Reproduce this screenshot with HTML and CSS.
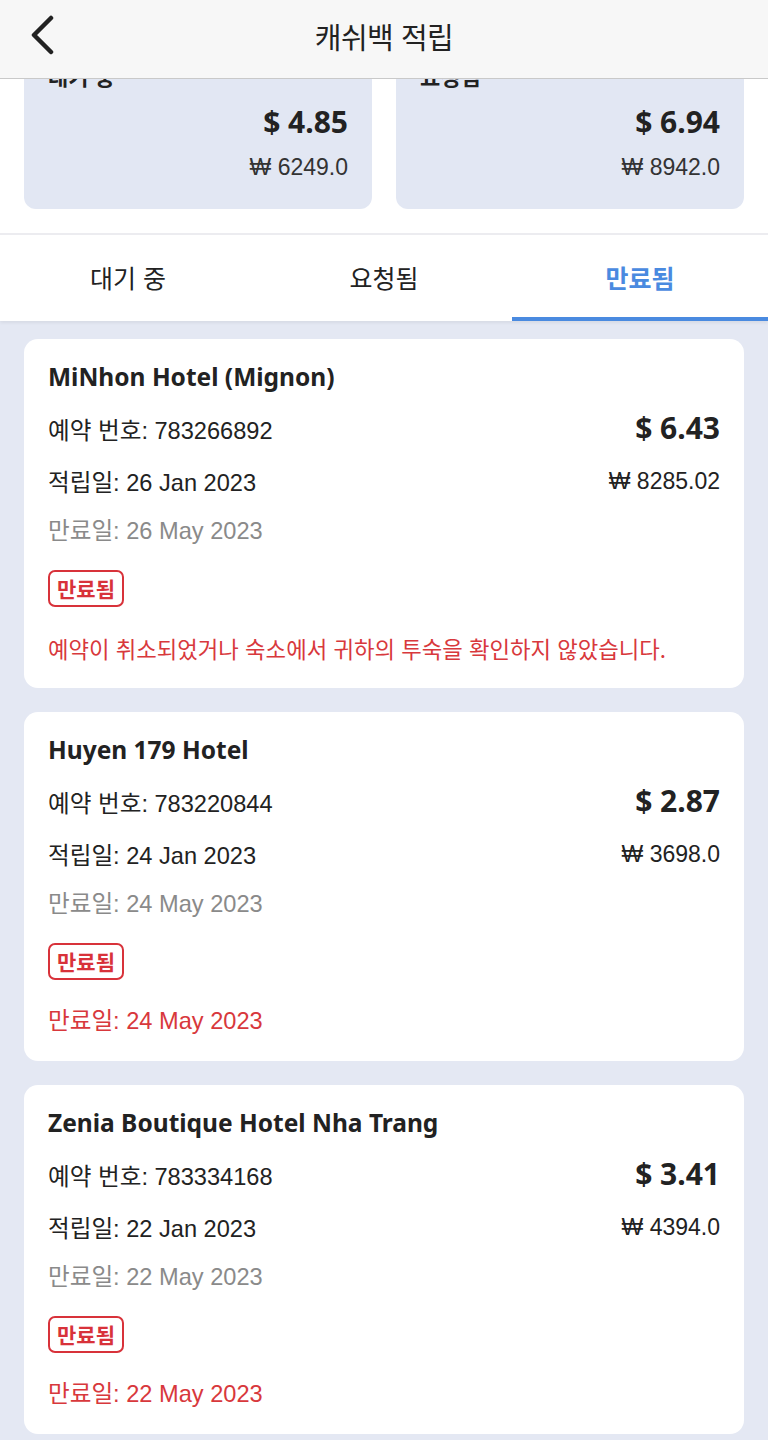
FILE: index.html
```html
<!DOCTYPE html>
<html lang="ko">
<head>
<meta charset="utf-8">
<title>캐쉬백 적립</title>
<link rel="stylesheet" href="styles.css">
</head>
<body>
<header class="topbar">
  <button class="back" aria-label="뒤로">
    <svg width="30" height="40" viewBox="0 0 30 40"><path d="M25 3 L8 20 L25 37" fill="none" stroke="#222" stroke-width="4.5" stroke-linecap="round" stroke-linejoin="round"/></svg>
  </button>
  <h1 class="title">캐쉬백 적립</h1>
</header>

<section class="summary">
  <div class="sum-card">
    <div class="sum-label">대기 중</div>
    <div class="sum-usd">$ 4.85</div>
    <div class="sum-krw">₩ 6249.0</div>
  </div>
  <div class="sum-card">
    <div class="sum-label">요청됨</div>
    <div class="sum-usd">$ 6.94</div>
    <div class="sum-krw">₩ 8942.0</div>
  </div>
</section>

<nav class="tabs">
  <div class="tab">대기 중</div>
  <div class="tab">요청됨</div>
  <div class="tab active">만료됨</div>
</nav>

<main class="list">
  <article class="card">
    <h2 class="hotel">MiNhon Hotel (Mignon)</h2>
    <div class="grid">
      <div class="r1 label">예약 번호: 783266892</div>
      <div class="r1 usd">$ 6.43</div>
      <div class="r2 label">적립일: 26 Jan 2023</div>
      <div class="r2 krw">₩ 8285.02</div>
      <div class="r3 label muted">만료일: 26 May 2023</div>
    </div>
    <span class="badge">만료됨</span>
    <p class="note">예약이 취소되었거나 숙소에서 귀하의 투숙을 확인하지 않았습니다.</p>
  </article>

  <article class="card">
    <h2 class="hotel">Huyen 179 Hotel</h2>
    <div class="grid">
      <div class="r1 label">예약 번호: 783220844</div>
      <div class="r1 usd">$ 2.87</div>
      <div class="r2 label">적립일: 24 Jan 2023</div>
      <div class="r2 krw">₩ 3698.0</div>
      <div class="r3 label muted">만료일: 24 May 2023</div>
    </div>
    <span class="badge">만료됨</span>
    <p class="note date">만료일: 24 May 2023</p>
  </article>

  <article class="card">
    <h2 class="hotel">Zenia Boutique Hotel Nha Trang</h2>
    <div class="grid">
      <div class="r1 label">예약 번호: 783334168</div>
      <div class="r1 usd">$ 3.41</div>
      <div class="r2 label">적립일: 22 Jan 2023</div>
      <div class="r2 krw">₩ 4394.0</div>
      <div class="r3 label muted">만료일: 22 May 2023</div>
    </div>
    <span class="badge">만료됨</span>
    <p class="note date">만료일: 22 May 2023</p>
  </article>
</main>
</body>
</html>
```

FILE: styles.css
```css
* { box-sizing: border-box; }
html, body { margin: 0; padding: 0; }
body {
  width: 768px;
  min-height: 1440px;
  background: #e4e8f3;
  font-family: "Liberation Sans", "Noto Sans CJK KR", sans-serif;
  color: #222;
  overflow: hidden;
}

.topbar {
  position: fixed;
  top: 0; left: 0;
  width: 768px;
  height: 79px;
  background: #f7f7f7;
  border-bottom: 1px solid #c9c9c9;
  display: flex;
  align-items: center;
  justify-content: center;
  z-index: 10;
}
.back {
  position: absolute;
  left: 26px;
  top: 15px;
  border: 0;
  background: none;
  padding: 0;
  width: 30px;
  height: 40px;
}
.title {
  margin: 0;
  font-family: "Noto Sans CJK KR", sans-serif;
  font-weight: 400;
  font-size: 29px;
  color: #222;
  letter-spacing: -0.5px;
  transform: translateY(-3px);
}

.summary {
  background: #fff;
  padding: 42px 24px 24px;
  display: grid;
  grid-template-columns: 1fr 1fr;
  gap: 24px;
  border-bottom: 2px solid #ececf0;
}
.sum-card {
  background: #e2e7f3;
  border-radius: 12px;
  padding: 18px 24px 24px;
  display: flex;
  flex-direction: column;
  align-items: flex-end;
  height: 167px;
}
.sum-label {
  align-self: flex-start;
  font-family: "Noto Sans CJK KR", sans-serif;
  font-weight: 700;
  font-size: 22px;
  line-height: 30px;
}
.sum-usd {
  font-family: "Noto Sans", sans-serif;
  font-weight: 700;
  font-size: 30px;
  line-height: 40px;
  margin-top: 12px;
}
.sum-krw {
  font-size: 23px;
  line-height: 30px;
  margin-top: 10px;
  color: #333;
}

.tabs {
  display: grid;
  grid-template-columns: repeat(3, 1fr);
  height: 86px;
  background: #fff;
  box-shadow: 0 2px 3px rgba(0,0,0,0.06);
  position: relative;
}
.tab {
  display: flex;
  align-items: center;
  justify-content: center;
  font-family: "Noto Sans CJK KR", sans-serif;
  font-size: 25px;
  color: #222;
  border-bottom: 4px solid transparent;
  padding-top: 2px;
}
.tab.active {
  color: #4a8ae0;
  font-weight: 700;
  border-bottom-color: #4a8ae0;
}

.list {
  padding: 18px 24px 24px;
  display: flex;
  flex-direction: column;
  gap: 24px;
}
.card {
  background: #fff;
  border-radius: 14px;
  padding: 22px 24px 25px;
  display: flex;
  flex-direction: column;
  align-items: flex-start;
}
.hotel {
  margin: 0;
  font-family: "Noto Sans", sans-serif;
  font-size: 24.5px;
  font-weight: 700;
  line-height: 32px;
  height: 32px;
  color: #222;
}
.grid {
  width: 100%;
  display: grid;
  grid-template-columns: 1fr auto;
  grid-template-rows: 52px 52px 44px;
  margin-top: 10px;
}
.grid > div { display: flex; align-items: center; }
.r1 { grid-row: 1; }
.r2 { grid-row: 2; }
.r3 { grid-row: 3; }
.label {
  grid-column: 1;
  font-size: 23.6px;
  color: #222;
}
.label.muted { color: #8a8a8a; }
.usd {
  grid-column: 2;
  justify-content: flex-end;
  font-family: "Noto Sans", sans-serif;
  font-size: 30px;
  font-weight: 700;
  color: #222;
  padding-bottom: 4px;
}
.krw {
  grid-column: 2;
  justify-content: flex-end;
  font-size: 23px;
  color: #222;
}
.badge {
  margin-top: 19px;
  height: 37px;
  padding: 0 7px;
  border: 2px solid #d8323a;
  border-radius: 7px;
  color: #d8323a;
  font-family: "Noto Sans CJK KR", sans-serif;
  font-weight: 700;
  font-size: 21px;
  line-height: 33px;
}
.note {
  margin: 26px 0 0;
  font-family: "Noto Sans CJK KR", sans-serif;
  font-size: 22.3px;
  line-height: 30px;
  color: #d8383c;
}
.note.date {
  font-family: "Liberation Sans", "Noto Sans CJK KR", sans-serif;
  font-size: 23.6px;
}
```
